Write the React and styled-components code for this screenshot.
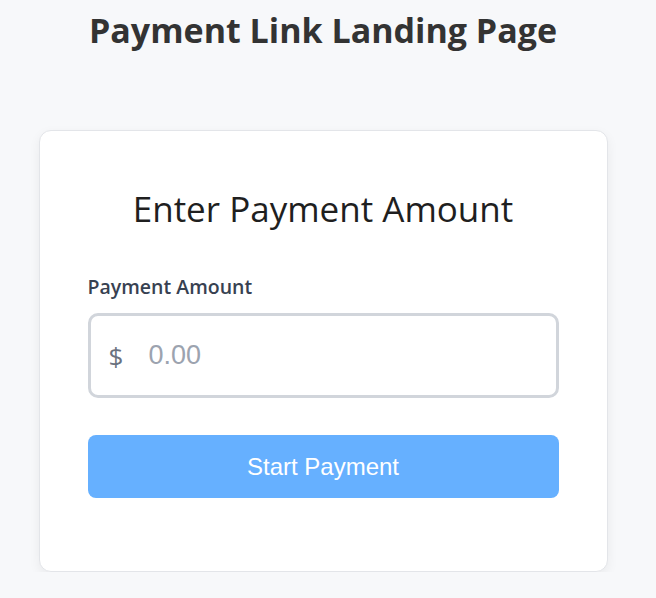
import React, { useState } from 'react';
import styled, { createGlobalStyle } from 'styled-components';

const GlobalStyle = createGlobalStyle`
  html, body {
    margin: 0;
    padding: 0;
    background: #f7f8fa;
  }
  body {
    font-family: 'Open Sans', 'Noto Sans', sans-serif;
  }
`;

const Page = styled.div`
  width: 646px;
  display: flex;
  flex-direction: column;
  align-items: center;
`;

const Title = styled.h1`
  margin: 8px 0 0;
  font-size: 34px;
  line-height: 44px;
  font-weight: 700;
  color: #333333;
`;

const Card = styled.div`
  box-sizing: border-box;
  width: 569px;
  margin-top: 78px;
  padding: 56px 48px 73px;
  background: #ffffff;
  border: 1px solid #e3e5e9;
  border-radius: 12px;
  box-shadow: 0 4px 12px rgba(0, 0, 0, 0.06);
`;

const Heading = styled.h2`
  margin: 0 0 42px;
  text-align: center;
  font-size: 35px;
  line-height: 44px;
  font-weight: 400;
  color: #1f1f1f;
`;

const Label = styled.label`
  display: block;
  margin-bottom: 13px;
  font-size: 19.5px;
  font-weight: 600;
  color: #374151;
`;

const InputBox = styled.div`
  display: flex;
  align-items: center;
  box-sizing: border-box;
  height: 85px;
  padding: 0 18px;
  border: 3px solid #d1d5db;
  border-radius: 10px;
`;

const Currency = styled.span`
  font-size: 26px;
  color: #6b7280;
  margin-right: 25px;
`;

const AmountInput = styled.input`
  flex: 1;
  border: none;
  outline: none;
  background: transparent;
  font-family: 'Liberation Sans', Arial, sans-serif;
  font-size: 27px;
  color: #111827;
  padding: 0;

  &::placeholder {
    color: #9ca3af;
  }
`;

const SubmitButton = styled.button`
  display: block;
  width: 100%;
  height: 63px;
  margin-top: 37px;
  border: none;
  border-radius: 8px;
  background: ${(p) => (p.disabled ? '#66b0ff' : '#0a84ff')};
  color: #ffffff;
  font-family: 'Liberation Sans', Arial, sans-serif;
  font-size: 24px;
  cursor: ${(p) => (p.disabled ? 'not-allowed' : 'pointer')};
`;

const App = () => {
  const [amount, setAmount] = useState('');

  return (
    <>
      <GlobalStyle />
      <Page>
        <Title>Payment Link Landing Page</Title>
        <Card>
          <Heading>Enter Payment Amount</Heading>
          <Label htmlFor="amount">Payment Amount</Label>
          <InputBox>
            <Currency>$</Currency>
            <AmountInput
              id="amount"
              type="text"
              placeholder="0.00"
              value={amount}
              onChange={(e) => setAmount(e.target.value)}
            />
          </InputBox>
          <SubmitButton disabled={!amount}>Start Payment</SubmitButton>
        </Card>
      </Page>
    </>
  );
};

export default App;
